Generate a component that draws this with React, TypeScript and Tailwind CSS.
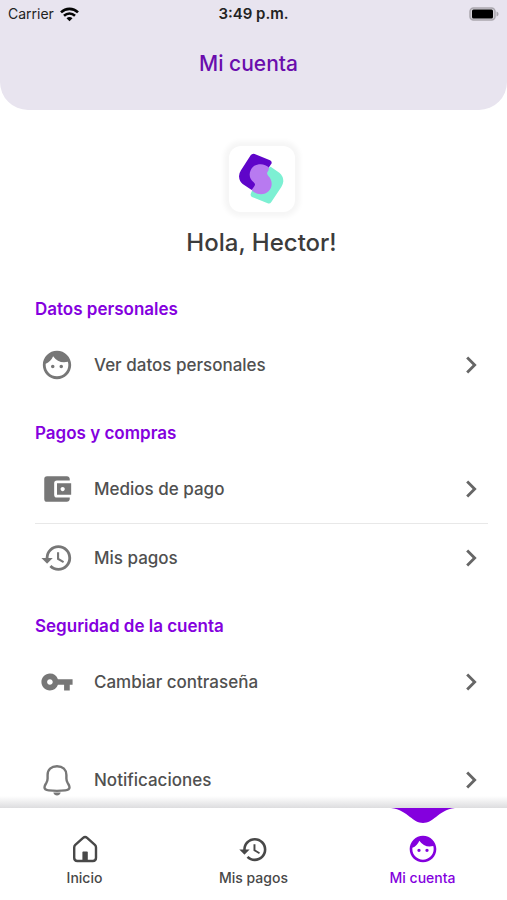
import type { ReactNode } from "react";
import { MdAccountBalanceWallet, MdChevronRight, MdFace, MdHistory, MdVpnKey } from "react-icons/md";

type Opcion = { texto: string; icono: ReactNode };
type Grupo = { titulo: string; opciones: Opcion[] };

function IconoCampana() {
  return (
    <svg width="34" height="34" viewBox="0 0 34 34" fill="none" aria-hidden="true">
      <path
        d="M17 3.200c-5.800 0-9.400 3.600-9.400 8.800v3.400c0 1.800-.4 3-1.300 4.600-.9 1.600-1.800 2.600-1.800 4.200 0 2.200 1.900 2.900 4.300 3.200 5.200.6 11.200.6 16.400 0 2.400-.3 4.300-1 4.300-3.200 0-1.600-.9-2.600-1.800-4.200-.9-1.600-1.300-2.800-1.300-4.600V12c0-5.200-3.600-8.800-9.400-8.800z"
        stroke="currentColor"
        strokeWidth="2.400"
      />
      <path d="M13.300 29.500h7.400c-.5 1.900-1.900 2.900-3.700 2.900s-3.200-1-3.700-2.900z" fill="currentColor" />
    </svg>
  );
}

function IconoInicio() {
  return (
    <svg width="32" height="32" viewBox="0 0 32 32" fill="none" aria-hidden="true">
      <path
        d="M5.200 14.400c0-1 .4-1.800 1.100-2.500l7.800-7.100c1.200-1.100 2.800-1.100 4 0l7.800 7.100c.7.7 1.100 1.500 1.100 2.500v10.400c0 2-1.200 3.200-3.200 3.200H8.400c-2 0-3.200-1.200-3.200-3.200z"
        stroke="currentColor"
        strokeWidth="2.400"
        strokeLinejoin="round"
      />
      <path d="M13.400 19.500c0-.7.4-1.100 1.100-1.100h3.200c.7 0 1.100.4 1.100 1.100v8h-5.400z" fill="currentColor" />
    </svg>
  );
}

function Logo() {
  return (
    <svg width="50" height="54" viewBox="200 65 150 162" role="img" aria-label="Logo">
      <path
        d="M253 71 299 90q6 3 5 9l-10 15-32 40-11 26q-4 1-8-2L217 161q-10-7-11-23 1-11 6-18L241 75q5-7 12-4z"
        fill="#5f05c9"
      />
      <path
        d="M301 109 327 127q12 10 12 26-1 10-6 17L303 215q-4 6-11 4L245 200q-5-3-4-9l5-12 30-40 17-25z"
        fill="#7df0d3"
      />
      <path
        d="M296 112c-14-16-46-14-55 8-7 16-1 29 9 36 5 4 5 8 2 12l-8 11c8 9 18 13 28 13 18 0 32-14 32-31 0-10-4-18-10-24-5-5-5-11 0-16z"
        fill="#b87af0"
      />
    </svg>
  );
}

const GRUPOS: Grupo[] = [
  {
    titulo: "Datos personales",
    opciones: [{ texto: "Ver datos personales", icono: <MdFace size={34} /> }],
  },
  {
    titulo: "Pagos y compras",
    opciones: [
      { texto: "Medios de pago", icono: <MdAccountBalanceWallet size={34} /> },
      { texto: "Mis pagos", icono: <MdHistory size={34} /> },
    ],
  },
  {
    titulo: "Seguridad de la cuenta",
    opciones: [{ texto: "Cambiar contraseña", icono: <MdVpnKey size={34} /> }],
  },
];

const TABS = [
  { texto: "Inicio", icono: <IconoInicio />, activo: false },
  { texto: "Mis pagos", icono: <MdHistory size={31} />, activo: false },
  { texto: "Mi cuenta", icono: <MdFace size={32} />, activo: true },
];

function FilaOpcion({ texto, icono }: Opcion) {
  return (
    <button type="button" className="flex h-[68px] w-full items-center gap-5 pl-[5px] text-left">
      <span className="shrink-0 text-[#777777]">{icono}</span>
      <span className="flex-1 text-[17px] leading-6 font-medium text-[#505050]">{texto}</span>
      <MdChevronRight size={34} className="shrink-0 text-[#666666]" />
    </button>
  );
}

function BarraEstado() {
  return (
    <div className="grid h-7 grid-cols-3 items-center px-2 text-[#222222]">
      <div className="flex items-center gap-1.5 text-sm">
        <span>Carrier</span>
        <svg width="19" height="15" viewBox="0 0 19 15" fill="none" stroke="#050505" strokeWidth="2.600" aria-hidden="true">
          <path d="M1 5.400C5.800.7 13.200.7 18 5.400" />
          <path d="M4 8.700c3.200-3 7.800-3 11 0" />
          <path d="M6.500 11.200c1.800-1.500 4.200-1.500 6 0l-3 3z" fill="#050505" stroke="none" />
        </svg>
      </div>
      <span className="text-center text-[15px] font-semibold">3:49 p.m.</span>
      <svg width="30" height="14" viewBox="0 0 30 14" className="justify-self-end" aria-hidden="true">
        <rect x="1" y="1" width="25" height="12" rx="3.500" fill="#d5d2d9" stroke="#aaa7ae" strokeWidth="1.500" />
        <rect x="3" y="2.500" width="21" height="9" rx="1.500" fill="#000" />
        <path d="M27.500 4.500c1.500.5 2 1.300 2 2.500s-.5 2-2 2.500z" fill="#aaa7ae" />
      </svg>
    </div>
  );
}

export default function App() {
  return (
    <div className="flex h-screen flex-col bg-white font-['Inter',sans-serif]">
      <header className="h-[110px] shrink-0 rounded-b-[28px] bg-[#e8e4ef]">
        <BarraEstado />
        <h1 className="mt-5 pr-2.5 text-center text-[21px] leading-8 font-medium text-[#6a0dad]">Mi cuenta</h1>
      </header>

      <main className="min-h-0 flex-1 overflow-hidden pt-9 pr-[19px] pl-[35px]">
        <div className="mx-auto flex size-[66px] items-center justify-center rounded-xl bg-white shadow-[0_0_5px_5px_#f6f6f6]">
          <Logo />
        </div>
        <p className="mt-[15px] mb-4 text-center text-2xl leading-8 font-medium text-[#3c3c3c]">Hola, Hector!</p>

        {GRUPOS.map((g) => (
          <section key={g.titulo}>
            <h2 className="pt-[22px] pb-2.5 text-[17px] leading-6 font-semibold text-[#8400de]">{g.titulo}</h2>
            <ul className="divide-y divide-[#e8e8e8]">
              {g.opciones.map((o) => (
                <li key={o.texto}>
                  <FilaOpcion {...o} />
                </li>
              ))}
            </ul>
          </section>
        ))}

        <div className="mt-[30px]">
          <FilaOpcion texto="Notificaciones" icono={<IconoCampana />} />
        </div>
      </main>

      <nav className="relative grid h-[92px] shrink-0 grid-cols-3 bg-white">
        <div className="absolute inset-x-0 bottom-full h-3 bg-linear-to-b from-transparent to-[#dddddf]" />
        {TABS.map((t) => (
          <a
            key={t.texto}
            href="#"
            aria-current={t.activo ? "page" : undefined}
            className={`relative flex flex-col items-center gap-[3px] pt-[25px] text-sm font-medium ${
              t.activo ? "text-[#8400de]" : "text-[#484848]"
            }`}
          >
            {t.activo && (
              <svg width="64" height="15" viewBox="0 0 64 15" className="absolute top-0" aria-hidden="true">
                <path d="M0 0c9 1 14 5 19 9 4 3 8 6 13 6s9-3 13-6c5-4 10-8 19-9z" fill="currentColor" />
              </svg>
            )}
            <span className="flex h-8 items-center">{t.icono}</span>
            <span className="leading-5">{t.texto}</span>
          </a>
        ))}
      </nav>
    </div>
  );
}
